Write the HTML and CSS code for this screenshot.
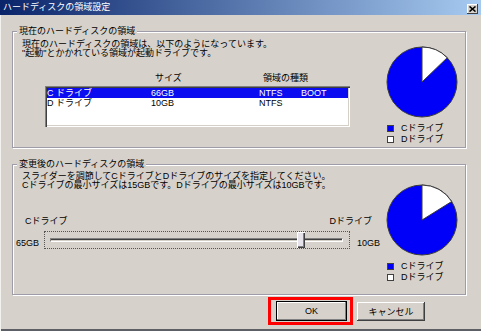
FILE: index.html
```html
<!DOCTYPE html>
<html>
<head>
	<meta charset="utf-8">
	<title>ハードディスクの領域設定</title>
	<link rel="stylesheet" href="styles.css">
</head>
<body>
	<div class="dialog">
		<div class="titlebar">
			<span class="title">ハードディスクの領域設定</span>
			<span class="close"><svg width="7" height="6" viewBox="0 0 7 6"><path d="M0.5 0.5L6.5 5.5M6.5 0.5L0.5 5.5" stroke="#000" stroke-width="1.6"/></svg></span>
		</div>
		<div class="body">
			<!-- 現在の領域 -->
			<fieldset class="group group-now">
				<legend>現在のハードディスクの領域</legend>
				<div class="group-inner">
					<div class="group-main">
						<p class="note">現在のハードディスクの領域は、以下のようになっています。<br>"起動"とかかれている領域が起動ドライブです。</p>
						<div class="cols">
							<span>サイズ</span>
							<span>領域の種類</span>
						</div>
						<div class="list">
							<div class="row sel">
								<span>C ドライブ</span><span>66GB</span><span>NTFS</span><span>BOOT</span>
							</div>
							<div class="row">
								<span>D ドライブ</span><span>10GB</span><span>NTFS</span><span></span>
							</div>
						</div>
					</div>
					<div class="group-side side-now">
						<svg class="pie" width="72" height="72" viewBox="0 0 72 72">
							<circle cx="36" cy="36" r="35" fill="#0000f8" stroke="#3a3a3a" stroke-width="1"/>
							<path d="M36 36L36 1A35 35 0 0 1 61.2 11.7Z" fill="#fff" stroke="#3a3a3a" stroke-width="1"/>
						</svg>
						<ul class="keys">
							<li class="key"><i class="sq sq-c"></i>Cドライブ</li>
							<li class="key"><i class="sq"></i>Dドライブ</li>
						</ul>
					</div>
				</div>
			</fieldset>
			<!-- 変更後の領域 -->
			<fieldset class="group group-new">
				<legend>変更後のハードディスクの領域</legend>
				<div class="group-inner group-inner-new">
					<div class="group-main main-new">
						<p class="note note-new">スライダーを調節してCドライブとDドライブのサイズを指定してください。<br>Cドライブの最小サイズは15GBです。Dドライブの最小サイズは10GBです。</p>
						<div class="ends">
							<span>Cドライブ</span>
							<span>Dドライブ</span>
						</div>
						<div class="slider-row">
							<span class="gb">65GB</span>
							<div class="track-box">
								<div class="track"></div>
								<span class="thumb"></span>
							</div>
							<span class="gb">10GB</span>
						</div>
					</div>
					<div class="group-side side-new">
						<svg class="pie" width="72" height="72" viewBox="0 0 72 72">
							<circle cx="36" cy="36" r="35" fill="#0000f8" stroke="#3a3a3a" stroke-width="1"/>
							<path d="M36 36L36 1A35 35 0 0 1 65.7 17.5Z" fill="#fff" stroke="#3a3a3a" stroke-width="1"/>
						</svg>
						<ul class="keys">
							<li class="key"><i class="sq sq-c"></i>Cドライブ</li>
							<li class="key"><i class="sq"></i>Dドライブ</li>
						</ul>
					</div>
				</div>
			</fieldset>
			<div class="actions">
				<span class="mark"><button class="btn btn-ok">OK</button></span>
				<button class="btn btn-cancel">キャンセル</button>
			</div>
		</div>
	</div>
</body>
</html>
```

FILE: styles.css
```css
*{
	margin: 0;
	padding: 0;
	box-sizing: border-box;
}
body{
	width: 481px;
	height: 331px;
	overflow: hidden;
	background: #d6d2cb;
	font-family: "Liberation Sans", "Noto Sans CJK JP", sans-serif;
	font-size: 9px;
	color: #000;
}
.dialog{
	width: 481px;
	height: 331px;
	background: #d6d2cb;
	box-shadow: inset 1px 0 #f4f2ee, inset 0 -2px #5e5e66;
}
.titlebar{
	height: 15px;
	display: flex;
	align-items: center;
	justify-content: space-between;
	padding: 0 3px;
	background: linear-gradient(to right, #0a246a, #a6caf0);
	color: #fff;
}
.title{
	line-height: 15px;
}
.close{
	width: 11px;
	height: 10px;
	margin-top: 2px;
	display: flex;
	align-items: center;
	justify-content: center;
	background: #d6d2cb;
	box-shadow: inset -1px -1px #404040, inset 1px 1px #fff;
}
.body{
	padding: 10px 0 0 12px;
}
.group{
	width: 454px;
	min-width: 0;
	border: 1px solid #9d9ca8;
	box-shadow: 1px 1px 0 #fff, inset 1px 1px 0 #fff;
}
.group legend{
	margin-left: 4px;
	padding: 0 2px;
	line-height: 12px;
	background: #d6d2cb;
}
.group-now{
	height: 123px;
}
.group-new{
	height: 137px;
	margin-top: 10px;
}
.group-inner{
	display: flex;
	padding-top: 3px;
}
.group-inner-new{
	padding-top: 2px;
}
.group-main{
	flex: 0 0 373px;
	padding-left: 9px;
}
.main-new{
	padding-left: 3px;
}
.side-now{
	padding-top: 6px;
}
.side-new{
	padding-top: 12px;
}
.note{
	line-height: 9px;
}
.note-new{
	padding-left: 6px;
}
.cols{
	display: grid;
	grid-template-columns: 108px auto;
	padding-left: 133px;
	margin-top: 15px;
	line-height: 10px;
}
.list{
	width: 305px;
	height: 41px;
	margin: 3px 0 0 23px;
	padding: 2px;
	background: #fff;
	box-shadow: inset 1px 1px #808080, inset 2px 2px #404040, inset -1px -1px #fff, inset -2px -2px #d4d0c8;
}
.row{
	display: grid;
	grid-template-columns: 104px 108px 42px auto;
	height: 10px;
	line-height: 10px;
}
.row.sel{
	background: #0c0cf0;
	color: #fff;
}
.pie{
	display: block;
}
.keys{
	list-style: none;
	margin-top: 5px;
}
.key{
	display: flex;
	align-items: center;
	gap: 7px;
	line-height: 11px;
	padding-left: 1px;
}
.sq{
	width: 7px;
	height: 7px;
	border: 1px solid #404040;
	background: #fff;
}
.sq-c{
	background: #0000f8;
}
.ends{
	display: flex;
	justify-content: space-between;
	width: 347px;
	margin: 26px 0 0 9px;
	line-height: 11px;
}
.slider-row{
	display: flex;
	align-items: flex-end;
	margin-top: 4px;
	height: 18px;
}
.gb{
	width: 28px;
	line-height: 11px;
}
.track-box{
	position: relative;
	width: 306px;
	height: 18px;
	margin-right: 7px;
	padding: 0 6px 0 5px;
	display: flex;
	align-items: center;
	border: 1px dotted #555;
}
.track{
	flex: 1;
	height: 4px;
	border-top: 1px solid #808080;
	border-left: 1px solid #808080;
	border-bottom: 1px solid #fff;
	border-right: 1px solid #fff;
	background: linear-gradient(#404040 50%, #d4d0c8 50%);
}
.thumb{
	position: absolute;
	left: 252px;
	top: 0;
	width: 8px;
	height: 16px;
	background: #e6e3ea;
	box-shadow: inset 1px 1px #fff, inset -1px -1px #404040, inset -2px -2px #808080;
}
.actions{
	display: flex;
	justify-content: flex-end;
	align-items: center;
	gap: 4px;
	margin-top: 2px;
	padding-right: 56px;
}
.mark{
	display: flex;
	padding: 1px 3px 1px 5px;
	border: 3px solid #f00;
}
.btn{
	height: 19px;
	border: none;
	background: #d6d2cb;
	font: inherit;
	color: #000;
	box-shadow: inset -1px -1px #404040, inset 1px 1px #fff, inset -2px -2px #808080;
}
.btn-ok{
	width: 71px;
	height: 20px;
	border: 1px solid #000;
	box-shadow: inset -1px -1px #808080, inset 1px 1px #fff;
}
.btn-cancel{
	width: 68px;
}
```
